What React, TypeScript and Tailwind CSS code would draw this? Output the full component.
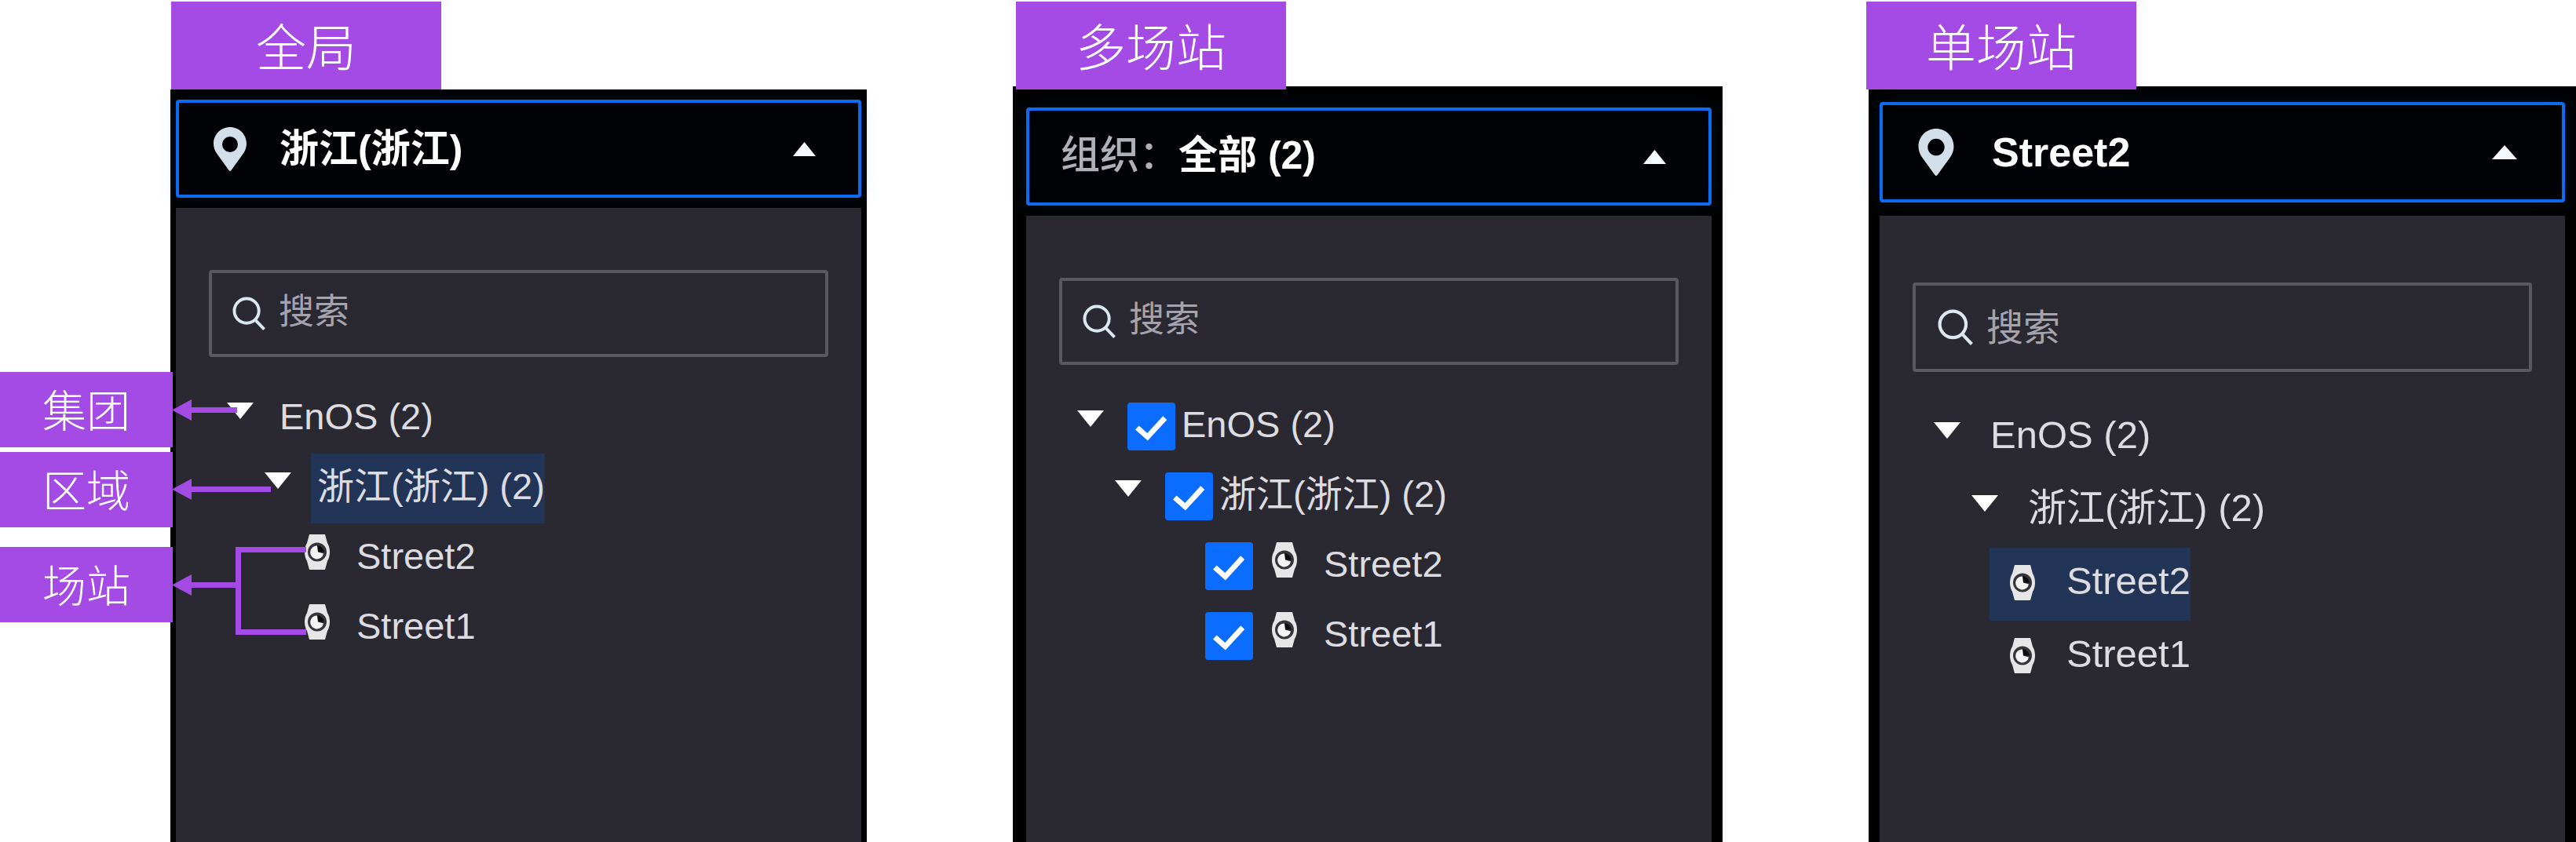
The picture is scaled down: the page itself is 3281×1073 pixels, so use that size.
import clsx from "clsx"

type TreeNode = {
  id: string
  label: string
  level: 0 | 1 | 2
  selected?: boolean
}

const baseNodes: TreeNode[] = [
  { id: "group", label: "EnOS (2)", level: 0 },
  { id: "region", label: "浙江(浙江) (2)", level: 1 },
  { id: "street2", label: "Street2", level: 2 },
  { id: "street1", label: "Street1", level: 2 },
]

const withSelected = (id: string) => baseNodes.map((node) => ({ ...node, selected: node.id === id }))

function PinIcon({ className }: { className: string }) {
  return (
    <svg viewBox="0 0 42 56" className={className} fill="#d3dfe8" aria-hidden="true">
      <path
        fillRule="evenodd"
        d="M21 0C9.400 0 0 9.300 0 21c0 5 1.600 9 4 12.500L19.500 55c.8 1.200 2.200 1.200 3 0L38 33.500c2.400-3.500 4-7.500 4-12.500C42 9.300 32.600 0 21 0Zm0 12a10 10 0 1 1 0 20 10 10 0 0 1 0-20Z"
      />
    </svg>
  )
}

function SearchIcon({ className }: { className: string }) {
  return (
    <svg viewBox="0 0 44 44" className={className} fill="none" stroke="#dbe8ef" strokeWidth="4" aria-hidden="true">
      <circle cx="18.500" cy="18.500" r="16" />
      <path d="M30 30.500 41.500 42.500" />
    </svg>
  )
}

function WatchIcon({ className }: { className: string }) {
  return (
    <svg viewBox="0 0 32 45" className={className} aria-hidden="true">
      <path fill="#e6e6e6" d="M6 0h20l3 11c2 3.200 3 7.300 3 11.500s-1 8.300-3 11.500L26 45H6L3 34c-2-3.200-3-7.300-3-11.500S1 14.200 3 11L6 0Z" />
      <circle cx="16" cy="22.500" r="12" fill="#35343b" />
      <path fill="#0c0c10" d="M16 22.500V14a10 10 0 0 1 9 8.500Z" />
      <path fill="#f4f4f4" d="M16 14.500a8.500 8.500 0 1 0 8 10l-7-2Z" />
    </svg>
  )
}

function CaretUp({ className }: { className: string }) {
  return (
    <svg viewBox="0 0 30 18" className={className} fill="#f4f9ff" preserveAspectRatio="none" aria-hidden="true">
      <path d="M15 0 30 18H0Z" />
    </svg>
  )
}

function CaretDown() {
  return (
    <svg viewBox="0 0 34 21" className="h-[21px] w-[34px]" fill="#ffffff" aria-hidden="true">
      <path d="M0 0h34L17 21Z" />
    </svg>
  )
}

function Check({ id, label }: { id: string; label: string }) {
  return (
    <span className="relative size-[61px] shrink-0">
      <input
        id={id}
        type="checkbox"
        defaultChecked
        aria-label={label}
        className="peer block size-full cursor-pointer appearance-none rounded border-2 border-[#5d5b66] checked:border-[#0a6dff] checked:bg-[#0a6dff]"
      />
      <svg
        viewBox="0 0 62 62"
        className="pointer-events-none absolute inset-0 hidden peer-checked:block"
        fill="none"
        stroke="#ffffff"
        strokeWidth="7"
        aria-hidden="true"
      >
        <path d="M12.500 32.500 26 44.500 48.500 20" />
      </svg>
    </span>
  )
}

type PanelProps = {
  name: string
  title: string
  prefix?: string
  nodes: TreeNode[]
  large?: boolean
  checkable?: boolean
  sectionClass: string
  tagClass?: string
  frameClass: string
}

function Panel({ name, title, prefix, nodes, large, checkable, sectionClass, tagClass, frameClass }: PanelProps) {
  return (
    <section className={clsx("flex min-w-0 flex-col pt-0.5", sectionClass)}>
      <h2
        className={clsx(
          "relative z-10 flex h-28 w-[344px] shrink-0 items-center justify-center bg-[#a54be5] pb-1 font-['Noto_Sans_CJK_SC',sans-serif] text-[64px] leading-none font-light text-white",
          tagClass
        )}
      >
        {name}
      </h2>

      <div className={clsx("flex flex-1 flex-col bg-black", frameClass)}>
        <button
          type="button"
          aria-expanded="true"
          className={clsx(
            "flex shrink-0 items-center rounded border-4 border-[#0b6cf2] bg-[#010206] font-bold whitespace-nowrap text-white shadow-[0_0_24px_rgba(0,110,200,0.15)]",
            prefix ? "pl-10" : "pl-11",
            large ? "h-32 pr-[57px] text-[52px]" : "h-[125px] pr-[54px] text-[50px]"
          )}
        >
          {prefix ? (
            <span className="pb-1 leading-none font-medium text-[#b0b0b8]">{prefix}</span>
          ) : (
            <PinIcon className={large ? "mr-[47px] h-[60px] w-12" : "mr-[42px] h-14 w-[42px]"} />
          )}
          <span className={clsx("flex-1 text-left leading-none", prefix && "pb-1")}>{title}</span>
          <CaretUp className={large ? "h-[18px] w-8" : "h-[18px] w-[29px]"} />
        </button>

        <div className={clsx("flex-1 bg-[#2a2831]", large ? "mt-[17px] pt-[85px]" : "mt-[13px] pt-[79px]")}>
          <div
            className={clsx(
              "mx-[42px] flex items-center gap-4 rounded border-4 border-[#5a5862] pr-4",
              large ? "h-[114px] pl-7" : "h-[111px] pl-[26px]"
            )}
          >
            <SearchIcon className={clsx("shrink-0", large ? "size-[46px]" : "size-[43px]")} />
            <input
              type="text"
              placeholder="搜索"
              aria-label={`${name}搜索`}
              className={clsx(
                "h-full min-w-0 flex-1 bg-transparent text-[#d9d9de] outline-none placeholder:text-[#a5a3ad]",
                large ? "text-[47px]" : "pb-1 text-[45px]"
              )}
            />
          </div>

          <ul className={clsx("text-[#dcdce1]", large ? "mt-[38px] text-[49px]" : "mt-[34px] text-[47px]")}>
            {nodes.map((node) => (
              <li
                key={node.id}
                className={clsx(
                  "flex items-center whitespace-nowrap",
                  large ? "h-[93px]" : "h-[89px]",
                  node.level === 0 && (large ? "pl-[69px]" : "pl-[65px]"),
                  node.level === 1 && (large ? "pl-[117px]" : "pl-[113px]"),
                  node.level === 2 && (checkable ? "pl-[228px]" : "pl-[140px]")
                )}
              >
                {node.level < 2 && (
                  <button
                    type="button"
                    aria-label={`折叠 ${node.label}`}
                    className={clsx("mb-5 shrink-0", checkable || large ? "mr-[30px]" : "mr-[25px]")}
                  >
                    <CaretDown />
                  </button>
                )}
                {checkable && <Check id={`check-${node.id}`} label={node.label} />}
                <button
                  type="button"
                  className={clsx(
                    "flex h-full items-center",
                    node.level < 2 && "pl-2",
                    node.level === 2 && (large ? "gap-10 pl-[26px]" : "gap-[34px] pl-6"),
                    node.selected && "bg-[#233557]"
                  )}
                >
                  {node.level === 2 && (
                    <WatchIcon className={clsx("h-[45px] w-8 shrink-0", large ? "mb-1" : "mb-4")} />
                  )}
                  <span className={clsx("leading-none", large ? "pb-2" : "pb-1.5")}>{node.label}</span>
                </button>
              </li>
            ))}
          </ul>
        </div>
      </div>
    </section>
  )
}

function LevelLabels() {
  return (
    <aside className="relative z-20 -mr-[3px] flex w-[220px] shrink-0 flex-col pt-[474px] font-['Noto_Sans_CJK_SC',sans-serif] text-[56px] leading-none font-light text-white">
      <div className="flex h-24 items-center justify-center bg-[#a54be5] pb-1">集团</div>
      <div className="mt-1.5 flex h-24 items-center justify-center bg-[#a54be5] pb-1">区域</div>
      <div className="mt-[25px] flex h-24 items-center justify-center bg-[#a54be5] pb-1">场站</div>

      {/* Arrows from the tree levels to their labels */}
      <svg
        viewBox="0 0 170 319"
        className="pointer-events-none absolute top-[500px] left-full h-[319px] w-[170px]"
        fill="none"
        stroke="#a54be5"
        strokeWidth="7"
        aria-hidden="true"
      >
        <path d="M20 22.500h62M20 123.500h105M20 245.500h63M170 200.500H83.500v105H170" />
        <path fill="#a54be5" stroke="none" d="M-1 22.500 24 9v27ZM-1 123.500 24 110v27ZM-1 245.500 24 232v27Z" />
      </svg>
    </aside>
  )
}

export default function App() {
  return (
    <main className="flex min-h-screen overflow-hidden bg-white font-['Liberation_Sans','Noto_Sans_CJK_SC',sans-serif]">
      <LevelLabels />
      <Panel
        name="全局"
        title="浙江(浙江)"
        nodes={withSelected("region")}
        sectionClass="flex-[887_1_0%]"
        tagClass="ml-px"
        frameClass="px-[7px] pt-[13px]"
      />
      <Panel
        name="多场站"
        prefix="组织："
        title="全部 (2)"
        nodes={baseNodes}
        checkable
        sectionClass="ml-[186px] flex-[904_1_0%]"
        tagClass="ml-1"
        frameClass="-mt-1 pt-[27px] pr-3.5 pl-[17px]"
      />
      <Panel
        name="单场站"
        title="Street2"
        nodes={withSelected("street2")}
        large
        sectionClass="ml-[186px] flex-[901_1_0%]"
        tagClass="-ml-[3px]"
        frameClass="-mt-1 px-3.5 pt-5"
      />
    </main>
  )
}
